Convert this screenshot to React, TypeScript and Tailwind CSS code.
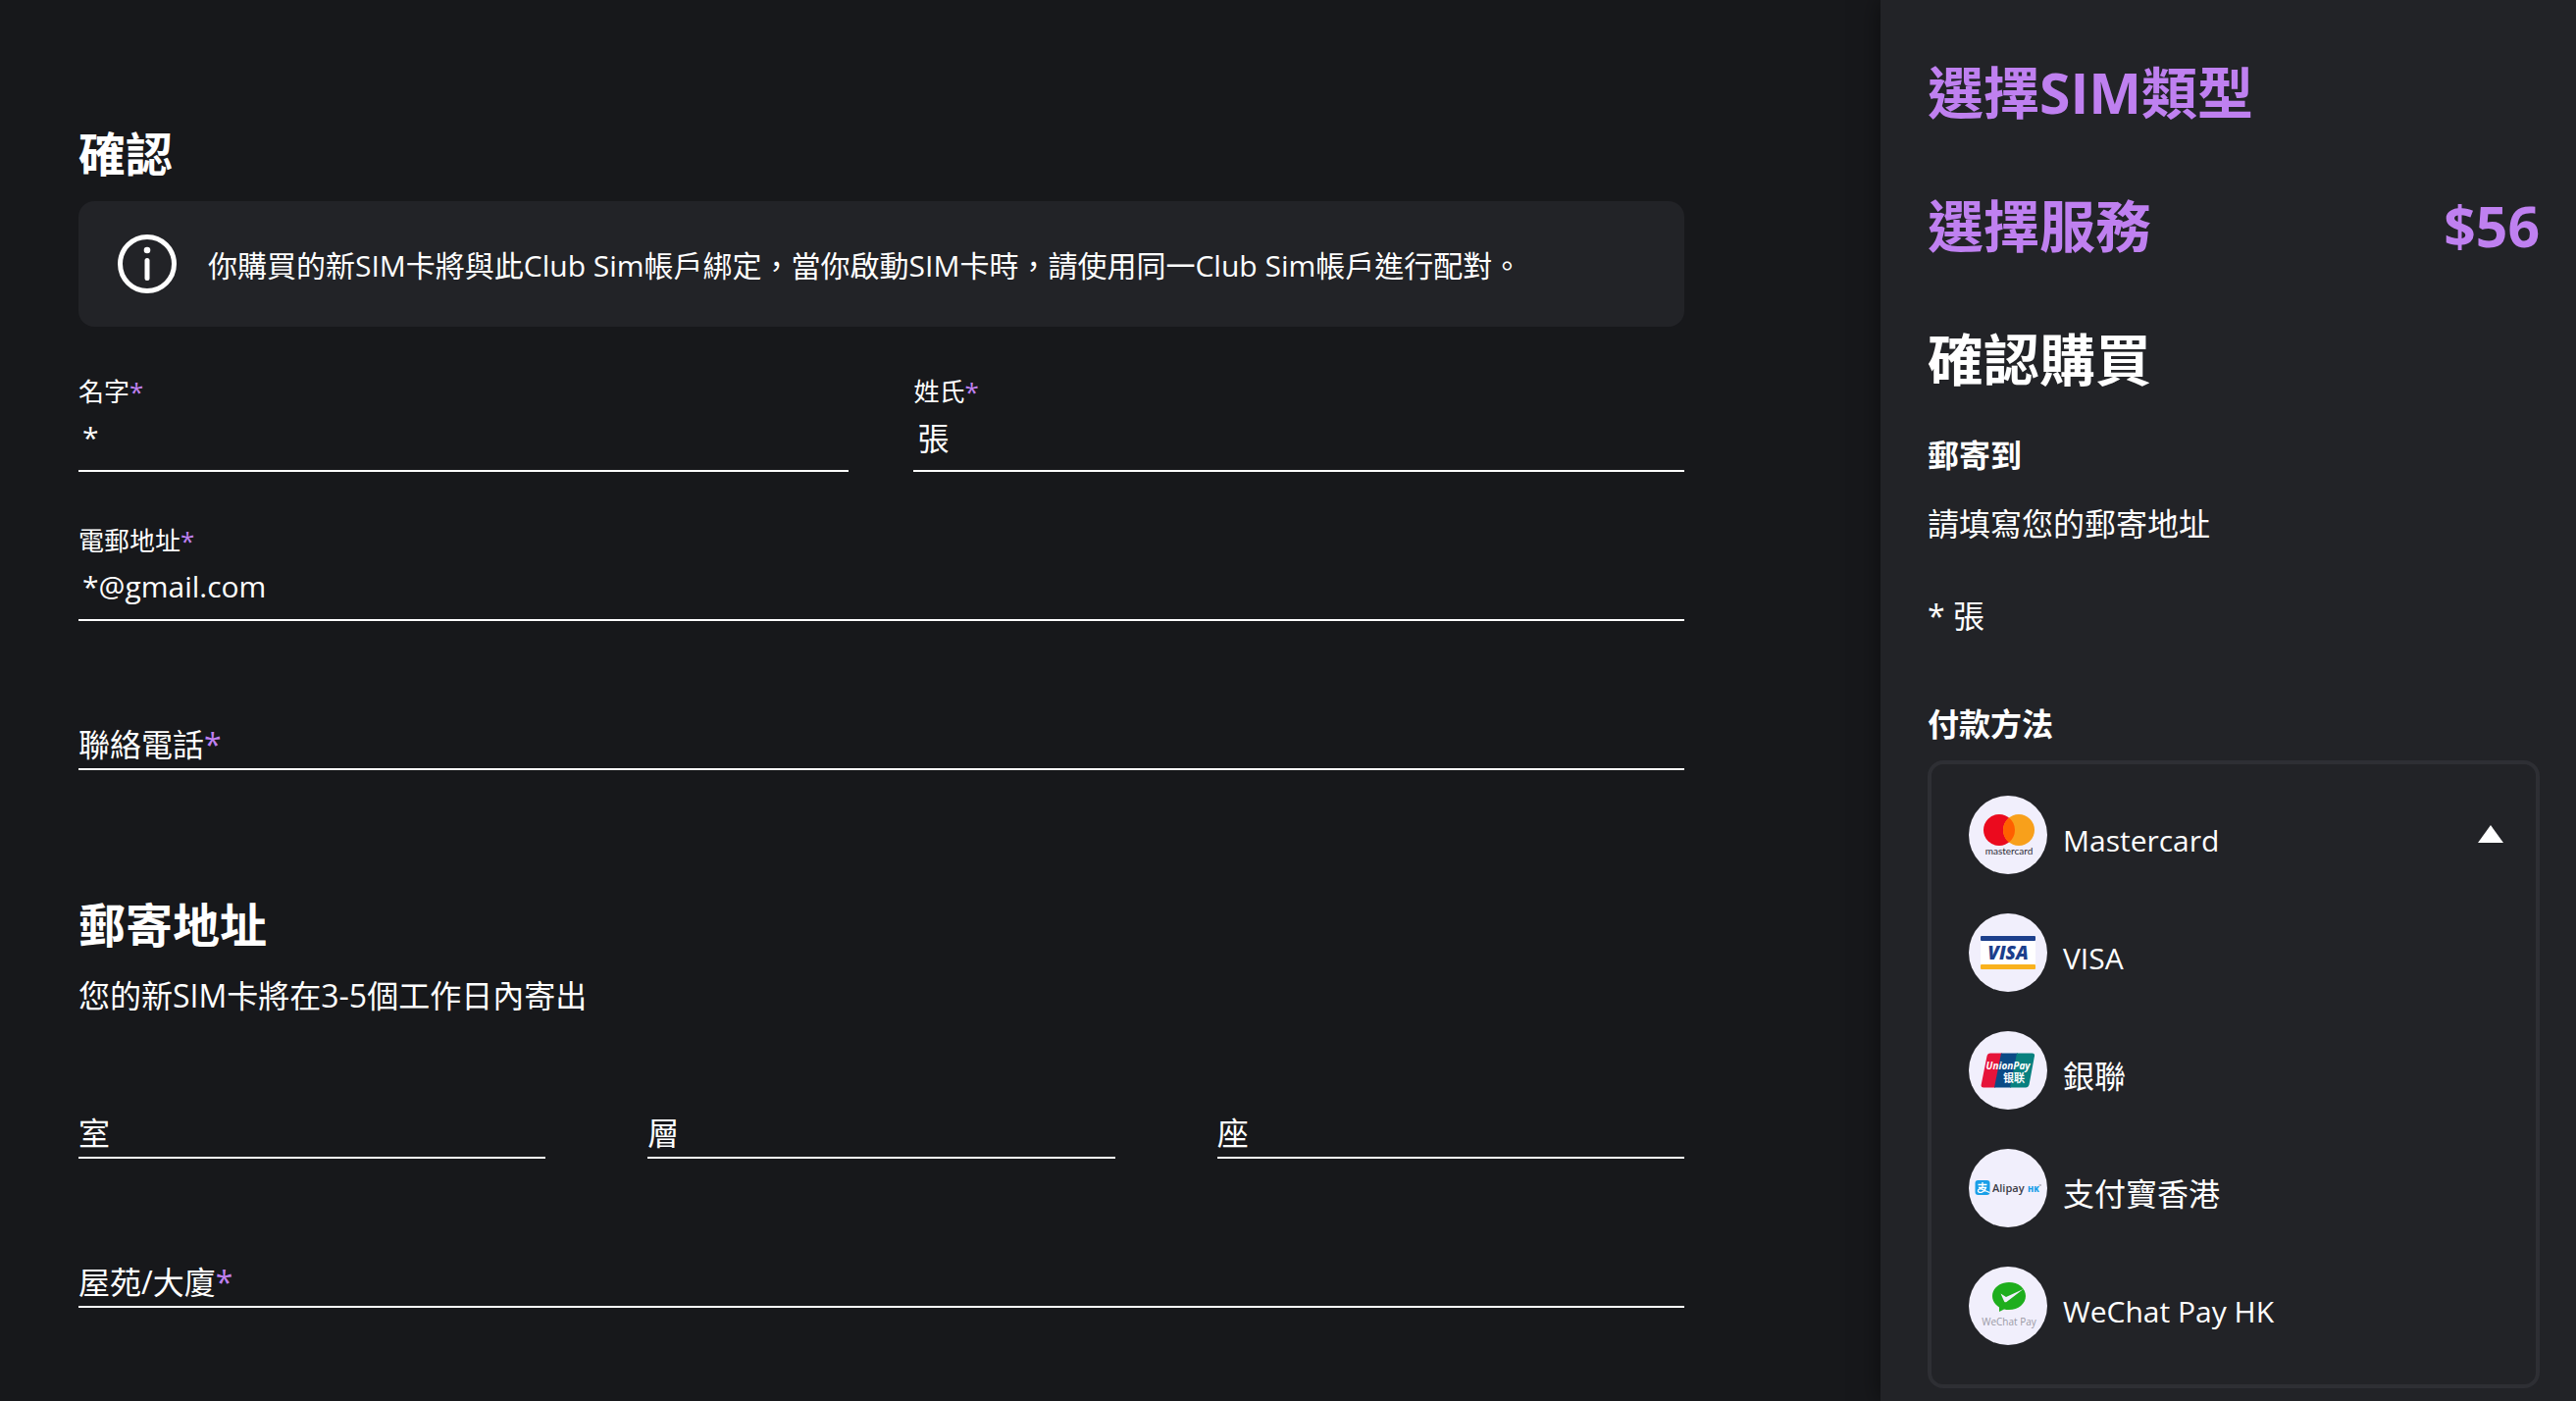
import { ReactNode, useState } from "react";
import { clsx } from "clsx";

interface FieldProps {
  id: string;
  label: string;
  value?: string;
  type?: string;
  required?: boolean;
}

interface PaymentMethod {
  id: string;
  name: string;
  logo: ReactNode;
}

// Latin text is set slightly smaller so that it sits evenly beside the Chinese text
const textSize = (text: string) => (/^[\x20-\x7e]+$/.test(text) ? "text-[30px]" : "text-[32px]");

const LogoCircle = ({ children }: { children: ReactNode }) => (
  <svg viewBox="0 0 80 80" className="size-20 shrink-0" aria-hidden="true">
    <circle cx="40" cy="40" r="40" fill="#f1effc" />
    {children}
  </svg>
);

const MastercardLogo = () => (
  <LogoCircle>
    <circle cx="31" cy="35" r="16" fill="#eb0a1e" />
    <circle cx="51" cy="35" r="16" fill="#f8a01b" />
    <path d="M41 22.5a16 16 0 0 1 0 25a16 16 0 0 1 0-25z" fill="#ff5f00" />
    <text x="41" y="60" textAnchor="middle" fontFamily="Lato, sans-serif" fontSize="10" fill="#2c2b35">
      mastercard
    </text>
  </LogoCircle>
);

const VisaLogo = () => (
  <LogoCircle>
    <rect x="12" y="25" width="56" height="30" fill="#ffffff" />
    <rect x="12" y="23" width="56" height="5" rx="1" fill="#1c3f8c" />
    <rect x="12" y="52" width="56" height="5" rx="1" fill="#f9b21d" />
    <text x="40" y="47" textAnchor="middle" fontFamily="Open Sans, sans-serif" fontSize="19" fontWeight="800" fontStyle="italic" fill="#1c3f8c">
      VISA
    </text>
  </LogoCircle>
);

const UnionPayLogo = () => (
  <LogoCircle>
    <path d="M22 22.500H34L27 57.500H15Q12 57.500 12.700 54.500L18.500 25.500Q19.200 22.500 22 22.500z" fill="#e6143a" />
    <path d="M33 22.500H50L43 57.500H26z" fill="#0b4a86" />
    <path d="M49 22.500H64.500Q67.500 22.500 67 25.500L61.500 54.500Q60.800 57.500 58 57.500H42z" fill="#08807f" />
    <text x="40" y="39" textAnchor="middle" fontFamily="Open Sans, sans-serif" fontSize="10" fontWeight="700" fontStyle="italic" fill="#ffffff">
      UnionPay
    </text>
    <text x="46" y="52" textAnchor="middle" fontFamily="Noto Sans CJK TC, sans-serif" fontSize="11" fontWeight="700" fill="#ffffff">
      银联
    </text>
  </LogoCircle>
);

const AlipayLogo = () => (
  <LogoCircle>
    <rect x="6.500" y="32" width="15" height="15" rx="3" fill="#1a9fe8" />
    <path d="M9.500 36.500h9M14 34v5M10 39.500h7.500c-.6 2-2 3.800-4 4.600c-2.500 1-4.700-.4-4-2.100c.8-1.700 3.500-1.300 6 0c2.300 1.200 4 2 6 2.600" fill="none" stroke="#ffffff" strokeWidth="1.300" />
    <text x="24" y="44" fontFamily="Open Sans, sans-serif" fontSize="11" fontWeight="600" fill="#3c3c46">
      Alipay
    </text>
    <text x="60" y="44" fontFamily="Open Sans, sans-serif" fontSize="8" fontWeight="800" fill="#1a9fe8">
      HK
    </text>
    <path d="M71.500 37h2.500" stroke="#8d8d99" strokeWidth="1" />
  </LogoCircle>
);

const WeChatPayLogo = () => (
  <LogoCircle>
    <path d="M41 16c9.600 0 17 6.200 17 14s-7.400 14-17 14c-1.800 0-3.400-.2-5-.6L31 46v-4.600c-4.200-2.500-7-6.700-7-11.400c0-7.800 7.400-14 17-14z" fill="#1fae1d" />
    <path d="M32.500 27.500L38 31l17.500-8L38.500 36c-1 .6-1.900.4-2.400-.5z" fill="#f1effc" />
    <text x="41" y="60" textAnchor="middle" fontFamily="Open Sans, sans-serif" fontSize="10" fill="#9a9aa4">
      WeChat Pay
    </text>
  </LogoCircle>
);

const PAYMENT_METHODS: PaymentMethod[] = [
  { id: "mastercard", name: "Mastercard", logo: <MastercardLogo /> },
  { id: "visa", name: "VISA", logo: <VisaLogo /> },
  { id: "unionpay", name: "銀聯", logo: <UnionPayLogo /> },
  { id: "alipayhk", name: "支付寶香港", logo: <AlipayLogo /> },
  { id: "wechatpayhk", name: "WeChat Pay HK", logo: <WeChatPayLogo /> },
];

const InfoIcon = () => (
  <svg viewBox="0 0 60 60" className="size-15 shrink-0" aria-hidden="true">
    <circle cx="30" cy="30" r="27.500" fill="none" stroke="#ffffff" strokeWidth="5" />
    <circle cx="30" cy="16" r="3.300" fill="#ffffff" />
    <path d="M30 26.500v18" stroke="#ffffff" strokeWidth="5" strokeLinecap="round" />
  </svg>
);

// The label rests on the line while the field is empty and moves above the text once it is filled
const Field = ({ id, label, value = "", type = "text", required = false }: FieldProps) => {
  const [text, setText] = useState(value);
  const filled = text !== "";

  return (
    <div className="grid h-28 min-w-0">
      <label
        htmlFor={id}
        className={clsx(
          "[grid-area:1/1] justify-self-start",
          filled ? "self-start pt-[10px] text-[26px] leading-10" : "self-end pb-[2px] text-[32px] leading-12"
        )}
      >
        {label}
        {required && <span className="text-[#bf80f0]">*</span>}
      </label>
      <input
        id={id}
        type={type}
        value={text}
        required={required}
        onChange={(e) => setText(e.target.value)}
        className={clsx(
          "[grid-area:1/1] h-16 w-full self-end border-b-2 border-white bg-transparent px-1 pb-[6px] leading-12 outline-none",
          textSize(text)
        )}
      />
    </div>
  );
};

const PaymentSelect = () => {
  const [selected, setSelected] = useState(PAYMENT_METHODS[0]);
  const [open, setOpen] = useState(true);
  const options = PAYMENT_METHODS.filter((method) => method.id !== selected.id);

  const choose = (method: PaymentMethod) => {
    setSelected(method);
    setOpen(false);
  };

  return (
    <div className="rounded-2xl border-4 border-[#2e2f34] pt-3 pb-5">
      <button
        type="button"
        aria-expanded={open}
        aria-labelledby="payment-title"
        onClick={() => setOpen(!open)}
        className="flex h-30 w-full items-center gap-4 pr-8 pl-[38px] text-left"
      >
        {selected.logo}
        <span className={clsx("flex-1 pt-3", textSize(selected.name))}>{selected.name}</span>
        <svg viewBox="0 0 28 20" className={clsx("h-5 w-7", !open && "rotate-180")} aria-hidden="true">
          <path d="M14 0L27 18H1z" fill="#ffffff" />
        </svg>
      </button>
      {open && (
        <ul>
          {options.map((method) => (
            <li key={method.id}>
              <button
                type="button"
                onClick={() => choose(method)}
                className="flex h-30 w-full items-center gap-4 pr-8 pl-[38px] text-left"
              >
                {method.logo}
                <span className={clsx("pt-3", textSize(method.name))}>{method.name}</span>
              </button>
            </li>
          ))}
        </ul>
      )}
    </div>
  );
};

const App = () => (
  <div className="flex min-h-screen bg-[#17181b] font-['Open_Sans','Noto_Sans_CJK_TC',sans-serif] text-[32px] leading-12 text-white">
    <main className="min-w-0 flex-1 pt-[121px] pr-[200px] pl-20">
      <h2 className="mb-3 text-5xl leading-18 font-bold">確認</h2>

      {/* Notice */}
      <div className="mb-9 flex min-h-32 items-center gap-8 rounded-2xl bg-[#222327] px-10">
        <InfoIcon />
        <p className="pt-1 text-[30px]">
          你購買的新SIM卡將與此Club Sim帳戶綁定，當你啟動SIM卡時，請使用同一Club Sim帳戶進行配對。
        </p>
      </div>

      {/* Personal details */}
      <div className="grid grid-cols-2 gap-x-[66px] gap-y-10">
        <Field id="first-name" label="名字" value="*" required />
        <Field id="last-name" label="姓氏" value="張" required />
        <div className="col-span-2">
          <Field id="email" label="電郵地址" type="email" value="*@gmail.com" required />
        </div>
        <div className="col-span-2">
          <Field id="phone" label="聯絡電話" type="tel" required />
        </div>
      </div>

      {/* Mailing address */}
      <h2 className="mt-[122px] mb-3 text-5xl leading-18 font-bold">郵寄地址</h2>
      <p className="mb-[30px]">您的新SIM卡將在3-5個工作日內寄出</p>
      <div className="grid grid-cols-3 gap-x-[104px] gap-y-10">
        <Field id="room" label="室" />
        <Field id="floor" label="層" />
        <Field id="block" label="座" />
        <div className="col-span-3">
          <Field id="building" label="屋苑/大廈" required />
        </div>
      </div>
    </main>

    {/* Order summary */}
    <aside className="w-[27%] shrink-0 bg-[#222327] pt-[54px] pr-[37px] pl-12 shadow-[0_0_24px_rgba(0,0,0,0.5)]">
      <div className="flex flex-col gap-14 text-[57px] leading-20 font-bold">
        <h2 className="text-[#bf80f0]">選擇SIM類型</h2>
        <div className="flex justify-between text-[#bf80f0]">
          <h2>選擇服務</h2>
          <span>$56</span>
        </div>
        <h2>確認購買</h2>
      </div>

      <h3 className="mt-[34px] font-bold">郵寄到</h3>
      <p className="mt-[22px]">請填寫您的郵寄地址</p>
      <p className="mt-[46px]">* 張</p>

      <h3 id="payment-title" className="mt-[62px] mb-[13px] font-bold">付款方法</h3>
      <PaymentSelect />
    </aside>
  </div>
);

export default App;
